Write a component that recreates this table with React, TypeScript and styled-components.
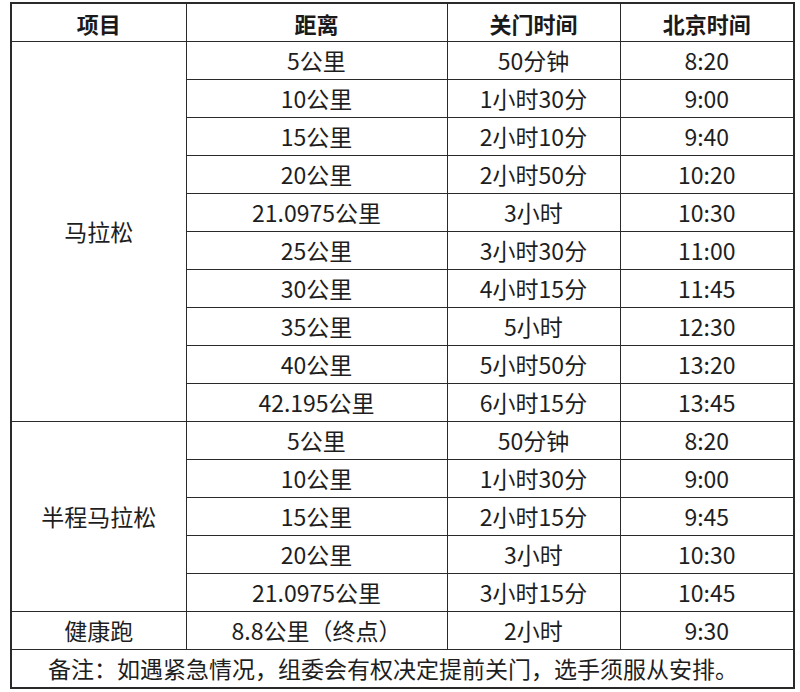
import React from "react";
import styled, { createGlobalStyle } from "styled-components";

const Global = createGlobalStyle`
  html, body { margin: 0; padding: 0; background: #ffffff; }
  body { font-family: "Noto Sans CJK SC", "Noto Sans", sans-serif; color: #1e1e1e; }
`;

const Page = styled.div`
  padding: 2px 0 0 10px;
  width: 800px;
  box-sizing: border-box;
`;

const Table = styled.table`
  border-collapse: collapse;
  table-layout: fixed;
  width: 783px;
  border: 2px solid #2a2a2a;
`;

const HeadCell = styled.th`
  height: 37px;
  padding: 0;
  border: 1px solid #2a2a2a;
  font-size: 22px;
  font-weight: 700;
  text-align: center;
  vertical-align: middle;
  line-height: 1;
  color: #1a1a1a;
`;

const Cell = styled.td<{ $align?: "left" | "center" }>`
  height: 37px;
  padding: ${(p) => (p.$align === "left" ? "0 0 0 36px" : "0")};
  border: 1px solid #2a2a2a;
  font-size: 23px;
  font-weight: 400;
  text-align: ${(p) => p.$align ?? "center"};
  vertical-align: middle;
  line-height: 1;
  color: #1e1e1e;
  white-space: nowrap;
`;

type Row = [string, string, string];

const marathon: Row[] = [
  ["5公里", "50分钟", "8:20"],
  ["10公里", "1小时30分", "9:00"],
  ["15公里", "2小时10分", "9:40"],
  ["20公里", "2小时50分", "10:20"],
  ["21.0975公里", "3小时", "10:30"],
  ["25公里", "3小时30分", "11:00"],
  ["30公里", "4小时15分", "11:45"],
  ["35公里", "5小时", "12:30"],
  ["40公里", "5小时50分", "13:20"],
  ["42.195公里", "6小时15分", "13:45"],
];

const half: Row[] = [
  ["5公里", "50分钟", "8:20"],
  ["10公里", "1小时30分", "9:00"],
  ["15公里", "2小时15分", "9:45"],
  ["20公里", "3小时", "10:30"],
  ["21.0975公里", "3小时15分", "10:45"],
];

function Group({ name, rows }: { name: string; rows: Row[] }) {
  return (
    <>
      {rows.map((r, i) => (
        <tr key={i}>
          {i === 0 && <Cell rowSpan={rows.length}>{name}</Cell>}
          <Cell>{r[0]}</Cell>
          <Cell>{r[1]}</Cell>
          <Cell>{r[2]}</Cell>
        </tr>
      ))}
    </>
  );
}

export default function App() {
  return (
    <Page>
      <Global />
      <Table>
        <colgroup>
          <col style={{ width: 175 }} />
          <col style={{ width: 261 }} />
          <col style={{ width: 173 }} />
          <col style={{ width: 174 }} />
        </colgroup>
        <thead>
          <tr>
            <HeadCell>项目</HeadCell>
            <HeadCell>距离</HeadCell>
            <HeadCell>关门时间</HeadCell>
            <HeadCell>北京时间</HeadCell>
          </tr>
        </thead>
        <tbody>
          <Group name="马拉松" rows={marathon} />
          <Group name="半程马拉松" rows={half} />
          <tr>
            <Cell>健康跑</Cell>
            <Cell>8.8公里（终点）</Cell>
            <Cell>2小时</Cell>
            <Cell>9:30</Cell>
          </tr>
          <tr>
            <Cell colSpan={4} $align="left">
              备注：如遇紧急情况，组委会有权决定提前关门，选手须服从安排。
            </Cell>
          </tr>
        </tbody>
      </Table>
    </Page>
  );
}
